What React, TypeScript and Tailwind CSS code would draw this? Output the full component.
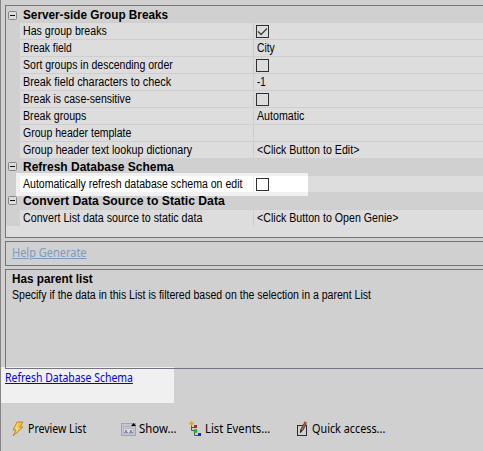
import { useLayoutEffect, useRef, useState } from "react";

/* Single line of text condensed horizontally to a given width. */
function Label({ text, w, className = "" }: { text: string; w: number; className?: string }) {
  const ref = useRef<HTMLSpanElement>(null);
  const [scale, setScale] = useState(1);
  useLayoutEffect(() => {
    if (ref.current) setScale(w / ref.current.offsetWidth);
  }, [w]);
  return (
    <span className="block shrink-0" style={{ width: w }}>
      <span
        ref={ref}
        className={`inline-block origin-left whitespace-nowrap align-top ${className}`}
        style={{ transform: `scaleX(${scale})` }}
      >
        {text}
      </span>
    </span>
  );
}

function Box({ checked = false }: { checked?: boolean }) {
  return (
    <svg width="13" height="13" viewBox="0 0 13 13" className="-ml-px block">
      <rect x=".5" y=".5" width="12" height="12" fill="none" stroke="#303030" />
      {checked && <path d="M2 6.500 5 9.500 11 3.500" fill="none" stroke="#404040" strokeWidth="1.3" />}
    </svg>
  );
}

function Header({ text, w, first = false }: { text: string; w: number; first?: boolean }) {
  return (
    <div className={`flex items-center bg-[#d0d0d0] pl-[2px] ${first ? "h-4 pt-[2px]" : "h-[17px]"}`}>
      <svg width="9" height="9" viewBox="0 0 9 9" className="mr-[6px] block">
        <rect x=".5" y=".5" width="8" height="8" rx="1" fill="#dcdcdc" stroke="#858585" />
        <path d="M2 4.500h5" stroke="#111" />
      </svg>
      <Label text={text} w={w} className="font-bold" />
    </div>
  );
}

type RowProps = { label: string; w: number; value?: string; vw?: number; box?: boolean; checked?: boolean };

function Row({ label, w, value, vw = 0, box, checked }: RowProps) {
  return (
    <div className="flex h-[17px] bg-[#d0d0d0] pl-[14px]">
      <div className="flex w-[233px] items-center border-t border-[#cecece] bg-[#dddddd] pl-[3px]">
        <Label text={label} w={w} />
      </div>
      <div className="flex flex-1 items-center border-l border-t border-[#cecece] bg-[#dddddd] pl-[3px]">
        {value && <Label text={value} w={vw} />}
        {box && <Box checked={checked} />}
      </div>
    </div>
  );
}

function Bolt() {
  return (
    <svg width="12" height="16" viewBox="0 0 12 16" className="block">
      <path d="M5 1h6L8 6h3L1 15 4 9H1z" fill="#f0c23a" stroke="#bd842a" strokeWidth=".9" />
      <path d="M6 2.500 3.500 7.500H6L4.500 10.500" fill="none" stroke="#fbe48c" />
    </svg>
  );
}

function CardIcon() {
  return (
    <svg width="16" height="16" viewBox="0 0 16 16" className="block">
      <rect x=".5" y="2.500" width="14" height="12" fill="#c6c6c9" stroke="#a3a3a9" />
      <path d="M1 5.500h13" stroke="#b2b2b7" />
      <rect x="2.500" y="7.500" width="10" height="5" fill="#d9dae0" stroke="#b8b8be" />
      <path d="M3 12V11h1V9h2v2h1v1zM8 12V11h1V9h2v2h1v1z" fill="#8090b4" />
      <path d="M12.500 2 15 5H10z" fill="#000" />
    </svg>
  );
}

function TreeIcon() {
  return (
    <svg width="13" height="16" viewBox="0 0 13 16" className="block">
      <path d="M2.500 4v5.500H5M2.500 6.500H5M5.500 11v3.500H9" fill="none" stroke="#555" />
      <path d="M2.500 0 5 2.500 2.500 5 0 2.500z" fill="#d5aa28" />
      <rect x="5" y="4" width="3" height="3" fill="#bd2020" />
      <circle cx="6.500" cy="10" r="2" fill="#20b038" />
      <rect x="9" y="12" width="3" height="3" fill="#2228cc" />
    </svg>
  );
}

function PencilIcon() {
  return (
    <svg width="11" height="16" viewBox="0 0 11 16" className="block">
      <rect x=".5" y="4.500" width="9" height="10" fill="none" stroke="#2b2b2b" />
      <path d="M3.500 11.500 4 8 7 2.500 9 3.500 6 9z" fill="#9b6850" stroke="#4a3c36" strokeWidth=".9" />
      <path d="M7 1.200 9.500 2.500" stroke="#b04c3a" strokeWidth="2" />
      <path d="M3.500 11.500 4.200 9" stroke="#222" strokeWidth="1.2" />
    </svg>
  );
}

export default function App() {
  return (
    <div className="flex h-[451px] w-[483px] flex-col overflow-hidden border-l border-[#858585] bg-[#d0d0d0] font-['Liberation_Sans',Arial,sans-serif] text-[12px] leading-[14px] text-black">
      <div className="ml-1 mt-[5px] h-[233px] shrink-0 border-y border-l border-[#74747f] bg-[#dddddd]">
        <Header text="Server-side Group Breaks" w={145} first />
        <Row label="Has group breaks" w={84} box checked />
        <Row label="Break field" w={49} value="City" vw={18} />
        <Row label="Sort groups in descending order" w={150} box />
        <Row label="Break field characters to check" w={148} value="-1" vw={9} />
        <Row label="Break is case-sensitive" w={108} box />
        <Row label="Break groups" w={63} value="Automatic" vw={47} />
        <Row label="Group header template" w={108} />
        <Row label="Group header text lookup dictionary" w={169} value="<Click Button to Edit>" vw={102} />
        <Header text="Refresh Database Schema" w={151} />
        <div className="relative z-10 h-[17px]">
          <Row label="" w={0} />
          <div className="absolute -top-[2px] left-[10px] h-[23px] w-[292px] bg-[#f0f0f0] pl-1 pt-[3px]">
            <div className="flex h-4">
              <div className="flex w-[233px] items-center bg-white pl-[3px]">
                <Label text="Automatically refresh database schema on edit" w={219} />
              </div>
              <div className="flex flex-1 items-center border-l border-[#f0f0f0] bg-white pl-[3px]">
                <Box />
              </div>
            </div>
          </div>
        </div>
        <Header text="Convert Data Source to Static Data" w={202} />
        <Row label="Convert List data source to static data" w={179} value="<Click Button to Open Genie>" vw={141} />
      </div>

      <div className="ml-1 mt-[3px] h-[25px] shrink-0 border-y border-l border-[#74747f] pl-[6px] pt-[4px] text-[#7f9abf]">
        <Label text="Help Generate" w={75} className="font-['Noto_Sans',sans-serif] underline" />
      </div>

      <div className="relative z-10 ml-1 mt-[3px] h-[100px] shrink-0 border-y border-l border-[#74747f] pl-[6px] pt-[2px]">
        <Label text="Has parent list" w={81} className="font-bold" />
        <div className="mt-[2px]">
          <Label text="Specify if the data in this List is filtered based on the selection in a parent List" w={359} />
        </div>
      </div>

      <div className="-mt-[2px] h-9 w-[173px] shrink-0 bg-[#f0f0f0] pl-[4px] pt-[4px] text-[#0000ee]">
        <Label text="Refresh Database Schema" w={128} className="font-['Noto_Sans',sans-serif] underline" />
      </div>

      <div className="mt-[18px] flex h-4 items-center pl-[11px] font-['Noto_Sans',sans-serif]">
        <Bolt />
        <div className="ml-[4px]"><Label text="Preview List" w={58} /></div>
        <div className="ml-[35px]"><CardIcon /></div>
        <div className="ml-[2px]"><Label text="Show..." w={38} /></div>
        <div className="ml-[12px]"><TreeIcon /></div>
        <div className="ml-[3px]"><Label text="List Events..." w={65} /></div>
        <div className="ml-[27px]"><PencilIcon /></div>
        <div className="ml-[4px]"><Label text="Quick access..." w={73} /></div>
      </div>
    </div>
  );
}
